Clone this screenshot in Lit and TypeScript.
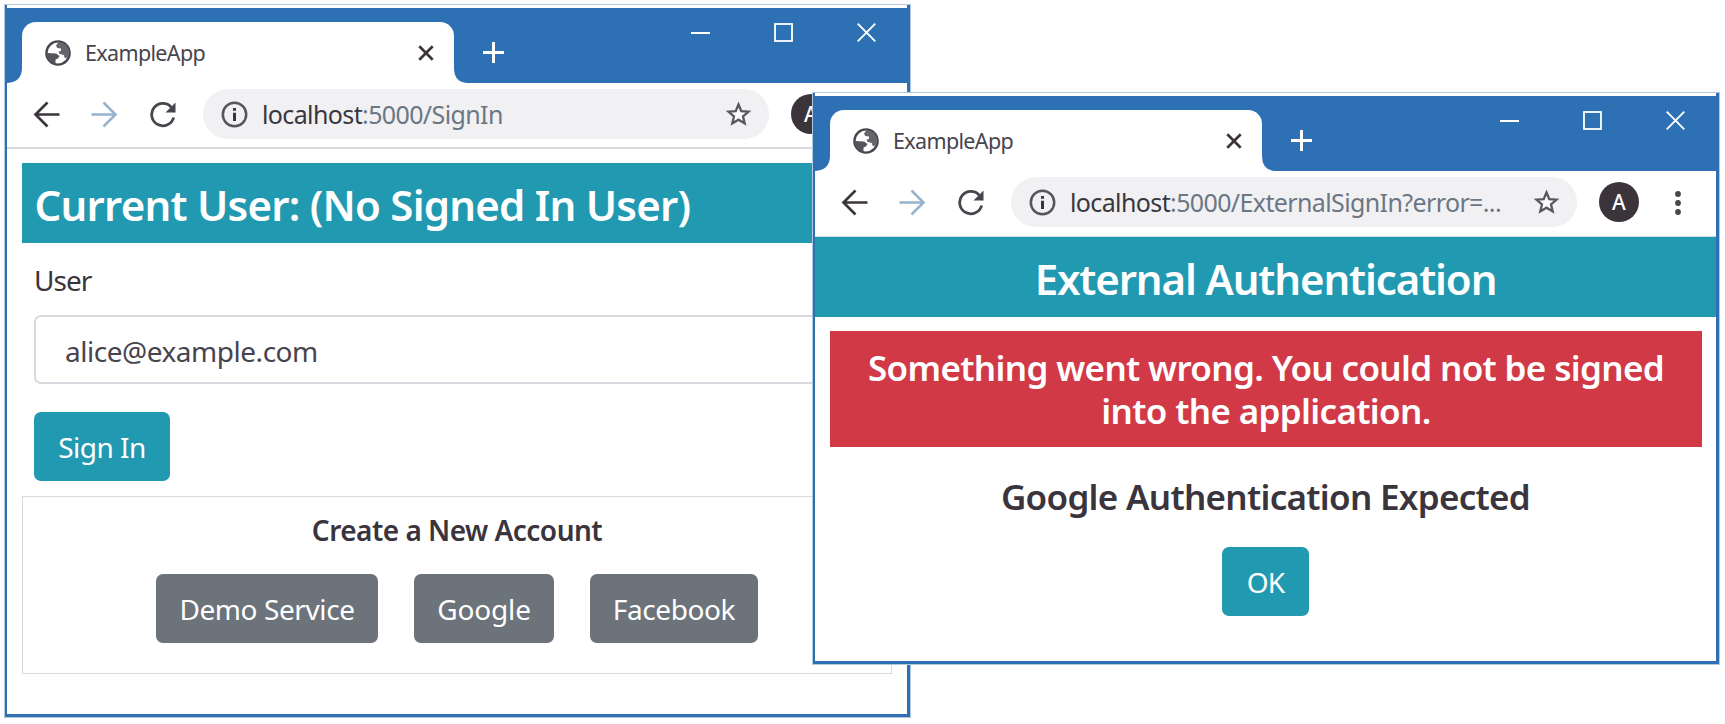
import { LitElement, html, css } from "lit";
import { customElement, property } from "lit/decorators.js";

@customElement("browser-window")
export class BrowserWindow extends LitElement {
  @property() host = "";
  @property() path = "";

  static styles = css`
    :host {
      display: flex;
      flex-direction: column;
      box-sizing: border-box;
      border: 2.5px solid #2d70b3;
      border-width: 0 3px 3px 2px;
      padding-top: 3px;
      background: #fff;
      box-shadow: 0 0 0 1px #b4c8dd;
      font-family: "Noto Sans", "Open Sans", sans-serif;
    }
    svg { display: block; flex: none; }
    .titlebar {
      display: flex;
      height: 75px;
      flex: none;
      background: #2d70b3;
    }
    .flare { width: 15px; height: 75px; }
    .tab {
      box-sizing: border-box;
      display: flex;
      align-items: center;
      width: 432px;
      height: 61px;
      margin-top: 14px;
      padding: 0 20px 0 23px;
      border-radius: 14px 14px 0 0;
      background: #fff;
    }
    .tab-title {
      flex: 1;
      margin-left: 14px;
      font-size: 21.5px;
      line-height: 30px;
      letter-spacing: -0.65px;
      color: #47444d;
    }
    .plus { margin: 33.5px 0 0 14px; }
    .controls {
      display: flex;
      gap: 64px;
      margin: 15px 31px 0 auto;
    }
    .toolbar {
      box-sizing: border-box;
      display: flex;
      align-items: center;
      height: 66px;
      flex: none;
      padding: 0 0 2px 26px;
      border-bottom: 2px solid #d9d9e0;
    }
    :host([flush]) .toolbar { border-bottom: 1px solid #d3dce2; height: 66px; padding-bottom: 3px; }
    .nav { display: flex; gap: 31px; width: 170px; }
    .address {
      box-sizing: border-box;
      display: flex;
      align-items: center;
      width: 566px;
      height: 50px;
      padding: 0 17px 0 18px;
      border-radius: 25px;
      background: #f1f1f4;
    }
    .url {
      flex: 1;
      margin-left: 14px;
      white-space: nowrap;
      font-size: 25px;
      line-height: 34px;
      letter-spacing: -0.62px;
      color: #6b7784;
    }
    .url b { font-weight: 400; color: #3a363f; }
    .avatar {
      width: 40px;
      height: 40px;
      margin-left: 22px;
      border-radius: 50%;
      background: #3b343b;
      color: #fff;
      font: 500 21px/40px "Noto Sans", sans-serif;
      text-align: center;
    }
    .menu { margin-left: 35px; }
    .page { flex: 1; min-height: 0; }
  `;

  render() {
    return html`
      <div class="titlebar">
        <svg class="flare" viewBox="0 0 15 75"><path d="M0 75Q15 74 15 60V75Z" fill="#fff" /></svg>
        <div class="tab">
          <svg width="26" height="26" viewBox="0 0 26 26">
            <circle cx="13" cy="13" r="11.6" fill="#fff" stroke="#47454e" stroke-width="2.4" />
            <path d="M13.5 2 11 5.5 12.2 8 16 8.600 16 11 13.500 11.500 14.500 14 19 15 19.500 18 23.500 17.500 24.500 11 21 4.500Z" fill="#66646c" />
            <path d="M1.500 13 11 13.500 14.500 16 13 18.500 10.500 19.500 10.500 24 5 22 1.800 17Z" fill="#56545d" />
          </svg>
          <span class="tab-title">ExampleApp</span>
          <svg width="16" height="16" viewBox="0 0 16 16"><path d="M1.300 1.300 14.700 14.700M14.700 1.300 1.300 14.700" stroke="#3b343b" stroke-width="2.700" /></svg>
        </div>
        <svg class="flare" viewBox="0 0 15 75"><path d="M0 60Q0 74 13 75H0Z" fill="#fff" /></svg>
        <svg class="plus" width="21" height="21" viewBox="0 0 21 21"><path d="M10.500 0V21M0 10.500H21" stroke="#fff" stroke-width="3" /></svg>
        <div class="controls">
          <svg width="19" height="19" viewBox="0 0 19 19"><path d="M0 10H19" stroke="#fff" stroke-width="2" /></svg>
          <svg width="19" height="19" viewBox="0 0 19 19"><rect x="1" y="1" width="17" height="17" fill="none" stroke="#fff" stroke-width="1.800" /></svg>
          <svg width="19" height="19" viewBox="0 0 19 19"><path d="M.7.7 18.300 18.300M18.300.7.7 18.300" stroke="#fff" stroke-width="1.900" /></svg>
        </div>
      </div>
      <div class="toolbar">
        <div class="nav">
          <svg width="27" height="27" viewBox="0 0 27 27"><path d="M14.500 1.500 2.500 13.500 14.500 25.500M2.500 13.500H26.500" fill="none" stroke="#3b343b" stroke-width="2.700" /></svg>
          <svg width="27" height="27" viewBox="0 0 27 27"><path d="M12.500 1.500 24.500 13.500 12.500 25.500M24.500 13.500H.5" fill="none" stroke="#98b3cc" stroke-width="2.600" /></svg>
          <svg width="27" height="27" viewBox="0 0 27 27">
            <path d="M22.400 6.300A11.200 11.200 0 1 0 24.700 16.500" fill="none" stroke="#47454e" stroke-width="2.800" />
            <path d="M26.500 1.500V11.500H16.500Z" fill="#47454e" />
          </svg>
        </div>
        <div class="address">
          <svg width="27" height="27" viewBox="0 0 27 27">
            <circle cx="13.500" cy="13.500" r="11.700" fill="none" stroke="#56545d" stroke-width="2.500" />
            <path d="M12 7H15V9.700H12ZM12 11.700H15V20H12Z" fill="#3b343b" />
          </svg>
          <span class="url"><b>${this.host}</b>${this.path}</span>
          <svg width="27" height="26" viewBox="0 0 27 26"><path d="M13.500 3.500 16.300 10.100 23.500 10.700 18 15.400 19.700 22.400 13.500 18.700 7.300 22.400 9 15.400 3.500 10.700 10.700 10.100Z" fill="#fdfdfe" stroke="#56575f" stroke-width="2.300" /></svg>
        </div>
        <div class="avatar">A</div>
        <svg class="menu" width="8" height="26" viewBox="0 0 8 26"><g fill="#47444b"><circle cx="4" cy="5" r="2.900" /><circle cx="4" cy="14" r="2.900" /><circle cx="4" cy="23" r="2.900" /></g></svg>
      </div>
      <div class="page"><slot></slot></div>
    `;
  }
}

@customElement("app-root")
export class AppRoot extends LitElement {
  static styles = css`
    :host {
      display: block;
      position: relative;
      width: 1725px;
      height: 724px;
      overflow: hidden;
      background: #fefefe;
      font-family: "Noto Sans", "Open Sans", sans-serif;
      color: #3a343c;
    }
    .win { position: absolute; }
    .sign-in { left: 5px; top: 5px; width: 905px; height: 712px; }
    .external { left: 813px; top: 93px; width: 906px; height: 571px; }
    h1, h2, h3 { margin: 0; font-weight: 600; white-space: nowrap; }
    .banner {
      box-sizing: border-box;
      height: 80px;
      padding-top: 3px;
      background: #2199b1;
      color: #fff;
      font-size: 42px;
      line-height: 77px;
    }
    .current {
      margin: 14px 15px 0;
      padding-left: 12.500px;
      letter-spacing: -0.77px;
    }
    .form { display: flex; flex-direction: column; align-items: flex-start; padding: 18px 27px 0; }
    .label { font-size: 28px; line-height: 38px; letter-spacing: -1px; }
    .input {
      box-sizing: border-box;
      align-self: stretch;
      height: 69px;
      margin: 16px 0 28px;
      padding: 2px 0 0 29px;
      border: 2px solid #d9d9e0;
      border-radius: 7px;
      font-size: 28px;
      line-height: 64px;
      letter-spacing: -0.47px;
      color: #47444d;
    }
    .btn {
      box-sizing: border-box;
      height: 69px;
      border: 0;
      border-radius: 7px;
      padding: 1px 0 0;
      background: #2199b1;
      color: #fff;
      font: 400 28px/68px "Noto Sans", "Open Sans", sans-serif;
      text-align: center;
      letter-spacing: -0.4px;
    }
    .submit { width: 136px; letter-spacing: -0.5px; }
    .accounts {
      box-sizing: border-box;
      height: 178px;
      margin: 15px 15px 0;
      border: 1.500px solid #d9d9e0;
      text-align: center;
    }
    .accounts h3 { padding-top: 13px; font-size: 28px; line-height: 40px; letter-spacing: -0.52px; }
    .providers { display: flex; justify-content: center; gap: 36px; margin-top: 24px; }
    .providers .btn { background: #6c737b; padding-top: 0; }
    .demo { width: 222px; }
    .google { width: 140px; letter-spacing: -0.14px; }
    .facebook { width: 168px; }
    .center { text-align: center; letter-spacing: -1.120px; }
    .alert {
      box-sizing: border-box;
      height: 116px;
      margin: 14px 14px 0 15px;
      padding-top: 14.500px;
      background: #d23947;
      color: #fff;
      font-size: 35px;
      line-height: 43.500px;
      letter-spacing: -0.650px;
      text-align: center;
    }
    .expected { margin-top: 28px; font-size: 35px; line-height: 44px; letter-spacing: -0.700px; text-align: center; }
    .confirm { display: flex; justify-content: center; margin-top: 28px; }
    .ok { width: 87px; letter-spacing: -0.900px; padding-top: 0; }
  `;

  render() {
    return html`
      <browser-window class="win sign-in" host="localhost" path=":5000/SignIn">
        <h1 class="banner current">Current User: (No Signed In User)</h1>
        <div class="form">
          <label class="label">User</label>
          <div class="input">alice@example.com</div>
          <button class="btn submit">Sign In</button>
        </div>
        <div class="accounts">
          <h3>Create a New Account</h3>
          <div class="providers">
            <button class="btn demo">Demo Service</button>
            <button class="btn google">Google</button>
            <button class="btn facebook">Facebook</button>
          </div>
        </div>
      </browser-window>
      <browser-window flush class="win external" host="localhost" path=":5000/ExternalSignIn?error=...">
        <h1 class="banner center">External Authentication</h1>
        <h2 class="alert">Something went wrong. You could not be signed<br />into the application.</h2>
        <h2 class="expected">Google Authentication Expected</h2>
        <div class="confirm"><button class="btn ok">OK</button></div>
      </browser-window>
    `;
  }
}
